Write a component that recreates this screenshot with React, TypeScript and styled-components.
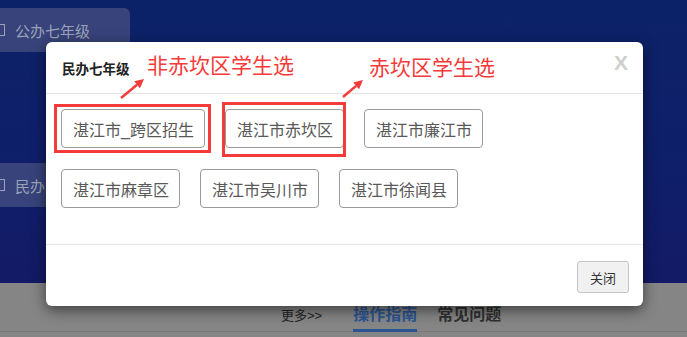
import React from 'react';
import styled, { createGlobalStyle } from 'styled-components';

const GlobalStyle = createGlobalStyle`
  html, body {
    margin: 0;
    padding: 0;
  }
  body {
    font-family: 'Liberation Sans', 'Noto Sans CJK SC', sans-serif;
    overflow: hidden;
  }
`;

const Page = styled.div`
  position: relative;
  width: 687px;
  height: 337px;
  overflow: hidden;
  display: flex;
  flex-direction: column;
`;

const Hero = styled.div`
  height: 283px;
  background: linear-gradient(180deg, #0c2268 0%, #0f1f6a 60%, #131a66 100%);
  display: flex;
  flex-direction: column;
  padding-top: 8px;
  box-sizing: border-box;
  gap: 111px;
`;

const GradeCard = styled.div`
  width: 130px;
  height: 44px;
  background: #37437a;
  border-radius: 0 6px 6px 0;
  display: flex;
  align-items: center;
  gap: 10px;
  color: #9ca2b8;
  font-size: 15px;
  white-space: nowrap;
`;

const CardIcon = styled.span`
  flex: none;
  width: 5px;
  height: 12px;
  border: 1.5px solid #9ca2b8;
  border-left: none;
  box-sizing: border-box;
`;

const Bottom = styled.div`
  flex: 1;
  background: #858585;
  display: flex;
  align-items: flex-end;
`;

const TabBar = styled.div`
  width: 100%;
  display: flex;
  align-items: flex-end;
  border-bottom: 1px solid #797979;
  padding-left: 281px;
  box-sizing: border-box;
  height: 48px;
  margin-bottom: 5px;
`;

const More = styled.span`
  font-size: 13px;
  color: #222;
  margin-right: 31px;
  padding-bottom: 7px;
`;

const Tab = styled.span<{ $active?: boolean }>`
  font-size: 16px;
  line-height: 20px;
  font-weight: bold;
  color: ${(p) => (p.$active ? '#2b5492' : '#2f2f2f')};
  border-bottom: 3px solid ${(p) => (p.$active ? '#2b5492' : 'transparent')};
  padding-bottom: 4px;
  margin-right: 20px;
  margin-bottom: -1px;
`;

const Modal = styled.div`
  position: absolute;
  left: 46px;
  top: 42px;
  width: 597px;
  height: 264px;
  background: #fff;
  border-radius: 6px;
  box-shadow: 0 4px 14px rgba(0, 0, 0, 0.55);
  display: flex;
  flex-direction: column;
`;

const Header = styled.div`
  height: 51px;
  border-bottom: 1px solid #e5e5e5;
  display: flex;
  align-items: center;
  justify-content: space-between;
  padding: 0 15px 0 16px;
`;

const Title = styled.span`
  font-size: 13.5px;
  font-weight: bold;
  color: #222;
  margin-top: 1px;
`;

const CloseX = styled.span`
  font-family: 'Liberation Sans', sans-serif;
  font-size: 21px;
  font-weight: bold;
  color: #cfcfcf;
  margin-top: -10px;
`;

const Body = styled.div`
  flex: 1;
  border-bottom: 1px solid #e5e5e5;
  padding: 15px 15px 0;
  display: flex;
  flex-direction: column;
  gap: 21px;
`;

const ButtonRow = styled.div`
  display: flex;
  gap: 20px;
`;

const AreaButton = styled.div`
  height: 39px;
  box-sizing: border-box;
  padding: 0 10px 0 11px;
  border: 1px solid #9a9a9a;
  border-radius: 4px;
  display: flex;
  align-items: center;
  font-size: 16px;
  color: #595959;
  background: #fff;
`;

const Footer = styled.div`
  height: 61px;
  display: flex;
  align-items: center;
  justify-content: flex-end;
  padding-right: 14px;
`;

const CloseButton = styled.div`
  width: 52px;
  height: 32px;
  box-sizing: border-box;
  border: 1px solid #c4c4c4;
  border-radius: 3px;
  background: #f1f1f1;
  color: #333;
  font-size: 13px;
  display: flex;
  align-items: center;
  justify-content: center;
  margin-top: 3px;
`;

const Mark = styled.div<{ $x: number; $y: number; $w: number; $h: number }>`
  position: absolute;
  left: ${(p) => p.$x}px;
  top: ${(p) => p.$y}px;
  width: ${(p) => p.$w}px;
  height: ${(p) => p.$h}px;
  border: 3px solid #f53a3a;
  box-sizing: border-box;
`;

const Note = styled.span<{ $x: number; $y: number }>`
  position: absolute;
  left: ${(p) => p.$x}px;
  top: ${(p) => p.$y}px;
  font-size: 21px;
  line-height: 24px;
  color: #f53a3a;
`;

const ArrowSvg = styled.svg`
  position: absolute;
  left: 0;
  top: 0;
  pointer-events: none;
`;

const areaRows = [
  ['湛江市_跨区招生', '湛江市赤坎区', '湛江市廉江市'],
  ['湛江市麻章区', '湛江市吴川市', '湛江市徐闻县'],
];

function Arrow({ x1, y1, x2, y2 }: { x1: number; y1: number; x2: number; y2: number }) {
  const a = Math.atan2(y2 - y1, x2 - x1);
  const len = 9;
  const w = 4.5;
  const bx = x2 - Math.cos(a) * len;
  const by = y2 - Math.sin(a) * len;
  const px = -Math.sin(a) * w;
  const py = Math.cos(a) * w;
  return (
    <g fill="#f53a3a" stroke="#f53a3a">
      <line x1={x1} y1={y1} x2={bx} y2={by} strokeWidth={2.5} />
      <polygon points={`${x2},${y2} ${bx + px},${by + py} ${bx - px},${by - py}`} stroke="none" />
    </g>
  );
}

export default function App() {
  return (
    <>
      <GlobalStyle />
      <Page>
        <Hero>
          <GradeCard>
            <CardIcon />
            公办七年级
          </GradeCard>
          <GradeCard>
            <CardIcon />
            民办七年级
          </GradeCard>
        </Hero>
        <Bottom>
          <TabBar>
            <More>更多&gt;&gt;</More>
            <Tab $active>操作指南</Tab>
            <Tab>常见问题</Tab>
          </TabBar>
        </Bottom>

        <Modal>
          <Header>
            <Title>民办七年级</Title>
            <CloseX>X</CloseX>
          </Header>
          <Body>
            {areaRows.map((row, i) => (
              <ButtonRow key={i}>
                {row.map((a) => (
                  <AreaButton key={a}>{a}</AreaButton>
                ))}
              </ButtonRow>
            ))}
          </Body>
          <Footer>
            <CloseButton>关闭</CloseButton>
          </Footer>
        </Modal>

        <Mark $x={54} $y={104} $w={157} $h={49} />
        <Mark $x={222} $y={102} $w={124} $h={55} />
        <Note $x={147} $y={54}>非赤坎区学生选</Note>
        <Note $x={369} $y={56}>赤坎区学生选</Note>
        <ArrowSvg width={687} height={337}>
          <Arrow x1={121} y1={98} x2={144} y2={79} />
          <Arrow x1={343} y1={97} x2={363} y2={80} />
        </ArrowSvg>
      </Page>
    </>
  );
}
